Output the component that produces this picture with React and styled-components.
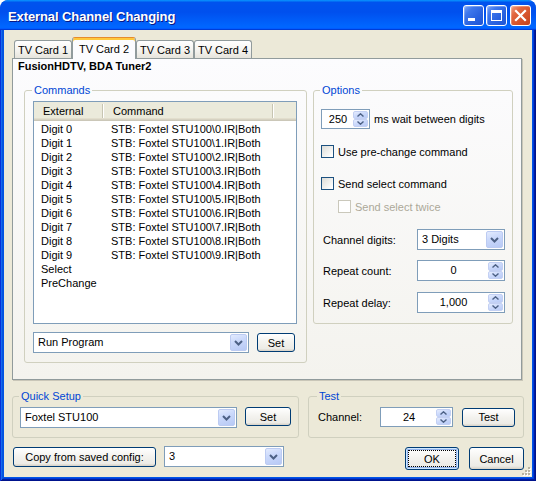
import React from "react";
import styled, { createGlobalStyle, css } from "styled-components";

const GlobalStyle = createGlobalStyle`
  html, body { margin: 0; padding: 0; background: #ffffff; }
  body { font-family: "Liberation Sans", Arial, sans-serif; font-size: 11px; color: #000; }
  * { box-sizing: border-box; }
`;

const FONT = `"Liberation Sans", Arial, sans-serif`;

const Window = styled.div`
  width: 536px;
  height: 481px;
  display: flex;
  flex-direction: column;
  border-radius: 8px 8px 0 0;
  overflow: hidden;
  background: #0055e5;
`;

const TitleBar = styled.div`
  height: 30px;
  flex: none;
  display: flex;
  align-items: center;
  padding: 0 5px 0 8px;
  border-radius: 8px 8px 0 0;
  background: linear-gradient(180deg, #0997ff, #0053ee 8%, #0050ee 40%, #0066ff 88%, #0066ff 93%, #005bff 95%, #003dd7 96%, #003dd7);
`;

const TitleText = styled.div`
  flex: 1;
  color: #fff;
  font: bold 13px ${FONT};
  letter-spacing: -0.1px;
  text-shadow: 1px 1px #0a1883;
  padding-top: 3px;
`;

const CapButton = styled.div`
  width: 21px;
  height: 21px;
  flex: none;
  margin-left: ${(p) => p.$gap}px;
  border: 1px solid #fff;
  border-radius: 3px;
  display: flex;
  box-shadow: inset 1px 1px rgba(255, 255, 255, 0.25);
  background: ${(p) =>
    p.$close
      ? "linear-gradient(135deg, #f0a183 0%, #e2663f 30%, #d5522a 65%, #c4431c 100%)"
      : "linear-gradient(135deg, #79a4f7 0%, #3e77ec 28%, #2a63e0 62%, #1f55d6 100%)"};
`;

const Frame = styled.div`
  flex: 1;
  display: flex;
  padding: 0 4px 4px;
  background: #0055e5;
  box-shadow: inset 1px 0 #0831d9, inset -1px -1px #00138c, inset 2px 0 #166aee,
    inset -2px -2px #001ea0, inset 3px 0 #0855dd, inset -3px -3px #003bda;
`;

const Client = styled.div`
  flex: 1;
  position: relative;
  display: flex;
  flex-direction: column;
  background: #ece9d8;
  padding: 7px 8px 0 8px;
`;

const TabStrip = styled.div`
  height: 21px;
  display: flex;
  align-items: flex-end;
  margin-left: 2px;
  position: relative;
  z-index: 1;
`;

const Tab = styled.div`
  width: ${(p) => p.$w}px;
  height: ${(p) => (p.$active ? 22 : 18)}px;
  margin-bottom: ${(p) => (p.$active ? -1 : 0)}px;
  flex: none;
  display: flex;
  align-items: center;
  justify-content: center;
  border: 1px solid #919b9c;
  border-bottom: none;
  border-radius: 3px 3px 0 0;
  white-space: nowrap;
  background: linear-gradient(180deg, #ffffff 0%, #f4f3ef 55%, #e6e4dc 100%);
  ${(p) =>
    p.$active &&
    css`
      border-top: 1px solid #e68b2c;
      box-shadow: inset 0 2px #ffc83c;
      background: #fcfcfe;
      padding-top: 1px;
    `}
`;

const Panel = styled.div`
  width: 510px;
  height: 322px;
  flex: none;
  border: 1px solid #919b9c;
  box-shadow: 1px 1px 0 #c9c6b8;
  background: linear-gradient(180deg, #fcfcfe 0%, #f4f3ee 100%);
  padding: 1px 5px;
`;

const PanelTitle = styled.div`
  font: bold 11px ${FONT};
  line-height: 13px;
`;

const GroupsRow = styled.div`
  display: flex;
  align-items: flex-start;
  gap: 6px;
  margin: 11px 0 0 6px;
`;

const Group = styled.fieldset`
  margin: 0;
  min-width: 0;
  flex: none;
  width: ${(p) => p.$w}px;
  padding: ${(p) => p.$pad};
  border: 1px solid #d0d0bf;
  border-radius: 3px;
`;

const Legend = styled.legend`
  padding: 0 2px;
  margin-left: -1px;
  color: #0046d5;
  font: 11px ${FONT};
  line-height: 13px;
`;

const ListView = styled.div`
  width: 264px;
  height: 223px;
  border: 1px solid #7f9db9;
  background: #fff;
  display: flex;
  flex-direction: column;
`;

const ListHeader = styled.div`
  height: 19px;
  flex: none;
  display: flex;
  align-items: flex-start;
  background: linear-gradient(
    180deg,
    #ebeadb 0,
    #ebeadb 16px,
    #e2decd 16px,
    #e2decd 17px,
    #d6d2c2 17px,
    #d6d2c2 18px,
    #cbc7b8 18px
  );
`;

const HeaderCell = styled.div`
  width: ${(p) => p.$w}px;
  flex: none;
  padding-left: 9px;
  line-height: 19px;
`;

const HeaderSep = styled.div`
  width: 2px;
  height: 14px;
  margin-top: 2px;
  flex: none;
  background: linear-gradient(90deg, #c7c5b2 50%, #ffffff 50%);
`;

const Rows = styled.div`
  padding-top: 1px;
`;

const Row = styled.div`
  display: grid;
  grid-template-columns: 70px 1fr;
  height: 14px;
  line-height: 14px;
`;

const Cell = styled.div`
  padding-left: 7px;
  white-space: nowrap;
`;

const ControlRow = styled.div`
  display: flex;
  align-items: ${(p) => p.$align || "center"};
  gap: ${(p) => p.$gap}px;
  margin-top: ${(p) => p.$mt || 0}px;
`;

const Combo = styled.div`
  width: ${(p) => p.$w}px;
  height: 21px;
  flex: none;
  margin-left: ${(p) => p.$ml || 0}px;
  display: flex;
  padding: 1px;
  border: 1px solid #7f9db9;
  background: #fff;
`;

const ComboText = styled.div`
  flex: 1;
  padding-left: 3px;
  line-height: 17px;
  white-space: nowrap;
`;

const ComboButton = styled.div`
  width: 17px;
  flex: none;
  display: flex;
  align-items: center;
  justify-content: center;
  border-radius: 2px;
  border: 1px solid #bccbf2;
  background: linear-gradient(160deg, #e3ebfe 0%, #cbd9fb 40%, #b7c9f5 100%);
`;

const Spin = styled.div`
  width: ${(p) => p.$w}px;
  height: ${(p) => p.$h}px;
  flex: none;
  display: flex;
  padding: 1px;
  border: 1px solid #7f9db9;
  background: #fff;
`;

const SpinValue = styled.div`
  flex: 1;
  display: flex;
  align-items: center;
  justify-content: center;
  padding-bottom: 1px;
`;

const SpinButtons = styled.div`
  width: 15px;
  flex: none;
  display: flex;
  flex-direction: column;
`;

const SpinButton = styled.div`
  flex: 1;
  display: flex;
  align-items: center;
  justify-content: center;
  border-radius: 2px;
  border: 1px solid #c3d0f3;
  background: linear-gradient(160deg, #e6edfe 0%, #cbd9fb 45%, #b9cbf6 100%);
`;

const Button = styled.button`
  width: ${(p) => p.$w}px;
  height: ${(p) => p.$h}px;
  margin-top: ${(p) => p.$mt || 0}px;
  margin-left: ${(p) => p.$ml || 0}px;
  flex: none;
  padding: 0;
  border: 1px solid #003c74;
  border-radius: 3px;
  color: #000;
  font: 11px ${FONT};
  background: linear-gradient(180deg, #ffffff 0%, #f3f2ee 50%, #ecebe6 86%, #d6d0c5 100%);
  white-space: nowrap;
  ${(p) =>
    p.$default &&
    css`
      box-shadow: inset 0 0 0 1px #cee7ff, inset 0 0 0 2px #94b4ec;
      outline: 1px dotted #000;
      outline-offset: -4px;
    `}
`;

const CheckRow = styled.div`
  display: flex;
  align-items: center;
  height: 13px;
  margin-top: ${(p) => p.$mt}px;
  margin-left: ${(p) => p.$ml || 0}px;
  color: ${(p) => (p.$disabled ? "#aca899" : "#000")};
  white-space: nowrap;
`;

const CheckBox = styled.span`
  width: 13px;
  height: 13px;
  flex: none;
  margin-right: 4px;
  border: 1px solid ${(p) => (p.$disabled ? "#cac8bb" : "#1c5180")};
  background: ${(p) => (p.$disabled ? "#ffffff" : "linear-gradient(135deg, #dcdcd7 0%, #ffffff 90%)")};
`;

const FieldRow = styled.div`
  display: grid;
  grid-template-columns: ${(p) => p.$cols};
  column-gap: ${(p) => p.$gap || 0}px;
  align-items: center;
  margin-top: ${(p) => p.$mt || 0}px;
`;

const FieldLabel = styled.span`
  padding-left: ${(p) => p.$pl || 0}px;
  white-space: nowrap;
`;

const BottomGroups = styled.div`
  display: flex;
  align-items: flex-start;
  gap: 9px;
  margin-top: 10px;
`;

const BottomRow = styled.div`
  display: flex;
  align-items: flex-start;
  margin-top: 8px;
`;

const Spacer = styled.div`
  flex: 1;
`;

const Grip = styled.svg`
  position: absolute;
  right: 1px;
  bottom: 1px;
`;

const Chevron = () => (
  <svg width="9" height="6" viewBox="0 0 9 6">
    <path d="M1 1 L4.5 4.5 L8 1" stroke="#4d6185" strokeWidth="2" fill="none" />
  </svg>
);

const SpinArrow = ({ up }) => (
  <svg width="7" height="4" viewBox="0 0 7 4">
    <path
      d={up ? "M0.5 3.5 L3.5 0.8 L6.5 3.5" : "M0.5 0.5 L3.5 3.2 L6.5 0.5"}
      stroke="#4d6185"
      strokeWidth="1.4"
      fill="none"
    />
  </svg>
);

const ComboBox = ({ w, ml, value }) => (
  <Combo $w={w} $ml={ml}>
    <ComboText>{value}</ComboText>
    <ComboButton>
      <Chevron />
    </ComboButton>
  </Combo>
);

const SpinBox = ({ w, h, value }) => (
  <Spin $w={w} $h={h}>
    <SpinValue>{value}</SpinValue>
    <SpinButtons>
      <SpinButton>
        <SpinArrow up />
      </SpinButton>
      <SpinButton>
        <SpinArrow />
      </SpinButton>
    </SpinButtons>
  </Spin>
);

const Check = ({ label, mt, ml, disabled }) => (
  <CheckRow $mt={mt} $ml={ml} $disabled={disabled}>
    <CheckBox $disabled={disabled} />
    {label}
  </CheckRow>
);

const rows = [
  ...Array.from({ length: 10 }, (_, i) => [`Digit ${i}`, `STB: Foxtel STU100\\${i}.IR|Both`]),
  ["Select", ""],
  ["PreChange", ""],
];

const tabs = [
  { label: "TV Card 1", w: 58 },
  { label: "TV Card 2", w: 64, active: true },
  { label: "TV Card 3", w: 58 },
  { label: "TV Card 4", w: 58 },
];

export default function App() {
  return (
    <>
      <GlobalStyle />
      <Window>
        <TitleBar>
          <TitleText>External Channel Changing</TitleText>
          <CapButton $gap={0}>
            <svg width="19" height="19" viewBox="0 0 19 19">
              <rect x="4" y="12" width="7" height="3" fill="#fff" />
            </svg>
          </CapButton>
          <CapButton $gap={2}>
            <svg width="19" height="19" viewBox="0 0 19 19">
              <rect x="4.5" y="4.5" width="10" height="10" stroke="#fff" strokeWidth="1" fill="none" />
              <rect x="4" y="4" width="11" height="3" fill="#fff" />
            </svg>
          </CapButton>
          <CapButton $gap={3} $close>
            <svg width="19" height="19" viewBox="0 0 19 19">
              <path d="M5 5 L14 14 M14 5 L5 14" stroke="#fff" strokeWidth="2.2" strokeLinecap="square" />
            </svg>
          </CapButton>
        </TitleBar>
        <Frame>
          <Client>
            <TabStrip>
              {tabs.map((t) => (
                <Tab key={t.label} $w={t.w} $active={t.active}>
                  {t.label}
                </Tab>
              ))}
            </TabStrip>
            <Panel>
              <PanelTitle>FusionHDTV, BDA Tuner2</PanelTitle>
              <GroupsRow>
                <Group $w={283} $pad="4px 9px 9px 8px">
                  <Legend>Commands</Legend>
                  <ListView>
                    <ListHeader>
                      <HeaderCell $w={68}>External</HeaderCell>
                      <HeaderSep />
                      <HeaderCell $w={168}>Command</HeaderCell>
                      <HeaderSep />
                    </ListHeader>
                    <Rows>
                      {rows.map(([a, b]) => (
                        <Row key={a}>
                          <Cell>{a}</Cell>
                          <Cell>{b}</Cell>
                        </Row>
                      ))}
                    </Rows>
                  </ListView>
                  <ControlRow $gap={8} $mt={8}>
                    <ComboBox w={216} value="Run Program" />
                    <Button $w={38} $h={19}>Set</Button>
                  </ControlRow>
                </Group>
                <Group $w={200} $pad="12px 7px 10px 7px">
                  <Legend>Options</Legend>
                  <ControlRow $gap={4}>
                    <SpinBox w={49} h={20} value="250" />
                    <span>ms wait between digits</span>
                  </ControlRow>
                  <Check mt={16} label="Use pre-change command" />
                  <Check mt={19} label="Send select command" />
                  <Check mt={10} ml={17} disabled label="Send select twice" />
                  <FieldRow $cols="96px 88px" $mt={16}>
                    <FieldLabel $pl={2}>Channel digits:</FieldLabel>
                    <ComboBox w={88} value="3 Digits" />
                  </FieldRow>
                  <FieldRow $cols="96px 88px" $mt={10}>
                    <FieldLabel $pl={2}>Repeat count:</FieldLabel>
                    <SpinBox w={88} h={21} value="0" />
                  </FieldRow>
                  <FieldRow $cols="96px 88px" $mt={11}>
                    <FieldLabel $pl={2}>Repeat delay:</FieldLabel>
                    <SpinBox w={88} h={21} value="1,000" />
                  </FieldRow>
                </Group>
              </GroupsRow>
            </Panel>
            <BottomGroups>
              <Group $w={287} $pad="4px 6px 9px 7px">
                <Legend>Quick Setup</Legend>
                <ControlRow $gap={8} $align="flex-start">
                  <ComboBox w={217} value="Foxtel STU100" />
                  <Button $w={46} $h={19}>Set</Button>
                </ControlRow>
              </Group>
              <Group $w={216} $pad="4px 8px 10px 9px">
                <Legend>Test</Legend>
                <FieldRow $cols="62px 73px 53px" $gap={0}>
                  <FieldLabel>Channel:</FieldLabel>
                  <SpinBox w={73} h={20} value="24" />
                  <Button $w={53} $h={19} $ml={9}>Test</Button>
                </FieldRow>
              </Group>
            </BottomGroups>
            <BottomRow>
              <Button $w={143} $h={20} $mt={1} $ml={1}>Copy from saved config:</Button>
              <ComboBox w={120} ml={8} value="3" />
              <Spacer />
              <Button $w={54} $h={23} $mt={1} $default>OK</Button>
              <Button $w={55} $h={23} $mt={1} $ml={10}>Cancel</Button>
            </BottomRow>
            <Grip width="10" height="10" viewBox="0 0 10 10">
              {[
                [8, 2],
                [8, 5],
                [5, 5],
                [8, 8],
                [5, 8],
                [2, 8],
              ].map(([x, y]) => (
                <g key={`${x}-${y}`}>
                  <rect x={x} y={y} width="2" height="2" fill="#ffffff" />
                  <rect x={x - 1} y={y - 1} width="2" height="2" fill="#b8b4a2" />
                </g>
              ))}
            </Grip>
          </Client>
        </Frame>
      </Window>
    </>
  );
}
